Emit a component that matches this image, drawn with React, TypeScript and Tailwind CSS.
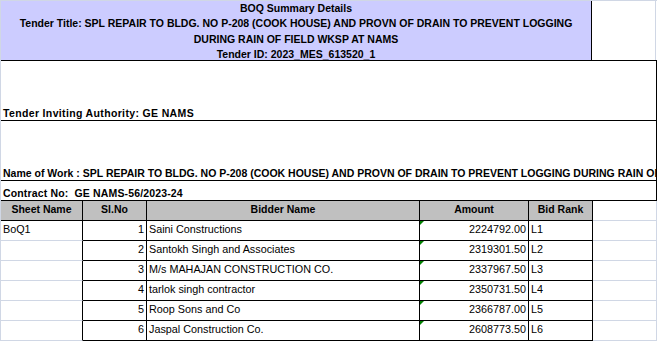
import React from 'react';

const bidders = [
  { sl: 1, name: 'Saini Constructions', amount: '2224792.00', rank: 'L1' },
  { sl: 2, name: 'Santokh Singh and Associates', amount: '2319301.50', rank: 'L2' },
  { sl: 3, name: 'M/s MAHAJAN CONSTRUCTION CO.', amount: '2337967.50', rank: 'L3' },
  { sl: 4, name: 'tarlok singh contractor', amount: '2350731.50', rank: 'L4' },
  { sl: 5, name: 'Roop Sons and Co', amount: '2366787.00', rank: 'L5' },
  { sl: 6, name: 'Jaspal Construction Co.', amount: '2608773.50', rank: 'L6' },
];

const App: React.FC = () => {
  return (
    <div className="w-[657px] h-[341px] overflow-hidden bg-white border-l border-[#d0d7e5] font-['Liberation_Sans',Arial,sans-serif] text-black">
      {/* Title block */}
      <div className="flex h-[61px] border-t border-b border-t-[#d0d7e5] border-b-black">
        <div className="w-[591px] bg-[#ccccff] border-r border-black flex flex-col items-center text-[10.5px] font-bold leading-[15.3px] whitespace-nowrap">
          <span>BOQ Summary Details</span>
          <span>Tender Title: SPL REPAIR TO BLDG. NO P-208 (COOK HOUSE) AND PROVN OF DRAIN TO PREVENT LOGGING</span>
          <span>DURING RAIN OF FIELD WKSP AT NAMS</span>
          <span>Tender ID: 2023_MES_613520_1</span>
        </div>
        <div className="w-[64px] border-r border-[#d0d7e5]" />
      </div>

      {/* Authority */}
      <div className="h-[60px] w-[656px] border-r border-b border-black flex items-end pl-[2px] pb-[1px] text-[10.5px] leading-[12px] tracking-[0.35px] font-bold">
        Tender Inviting Authority: GE NAMS
      </div>

      {/* Name of work */}
      <div className="h-[60px] w-[656px] border-r border-b border-black flex items-end pl-[2px] pb-[1px] text-[10.5px] leading-[12px] font-bold whitespace-nowrap overflow-hidden">
        Name of Work : SPL REPAIR TO BLDG. NO P-208 (COOK HOUSE) AND PROVN OF DRAIN TO PREVENT LOGGING DURING RAIN OF FIELD WKSP AT NAMS
      </div>

      {/* Contract */}
      <div className="h-[20px] w-[656px] border-r border-b border-black flex items-end pl-[2px] pb-[1px] text-[10.5px] leading-[12px] tracking-[0.15px] font-bold whitespace-pre">
        Contract No:  GE NAMS-56/2023-24
      </div>

      {/* Header */}
      <div className="flex h-[20px] text-[10.5px] leading-[12px] font-bold">
        <div className="w-[82px] bg-[#c0c0c0] border-r border-b border-black flex items-center justify-center pb-[3px]">Sheet Name</div>
        <div className="w-[64px] bg-[#c0c0c0] border-r border-b border-black flex items-center justify-center pb-[3px]">Sl.No</div>
        <div className="w-[273px] bg-[#c0c0c0] border-r border-b border-black flex items-center justify-center pb-[3px]">Bidder Name</div>
        <div className="w-[109px] bg-[#c0c0c0] border-r border-b border-black flex items-center justify-center pb-[3px]">Amount</div>
        <div className="w-[64px] bg-[#c0c0c0] border-r border-b border-black flex items-center justify-center pb-[3px]">Bid Rank</div>
        <div className="w-[64px] border-r border-b border-[#d0d7e5]" />
      </div>

      {/* Rows */}
      {bidders.map((b) => (
        <div key={b.sl} className="flex h-[20px] text-[10.8px] leading-[13px]">
          <div className="w-[82px] border-r border-b border-r-black border-b-[#d0d7e5] flex items-center pl-[2px] pb-[3px]">
            {b.sl === 1 ? 'BoQ1' : ''}
          </div>
          <div className="w-[64px] border-r border-b border-black flex items-center justify-end pr-[2px] pb-[3px]">{b.sl}</div>
          <div className="w-[273px] border-r border-b border-black flex items-center pl-[2px] pb-[3px]">{b.name}</div>
          <div className="relative w-[109px] border-r border-b border-black flex items-center justify-end pr-[2px] pb-[3px]">
            <span className="absolute left-0 top-0 w-0 h-0 border-t-[4px] border-r-[4px] border-t-[#008000] border-r-transparent" />
            {b.amount}
          </div>
          <div className="w-[64px] border-r border-b border-black flex items-center pl-[2px] pb-[3px]">{b.rank}</div>
          <div className="w-[64px] border-r border-b border-[#d0d7e5]" />
        </div>
      ))}
    </div>
  );
};

export default App;
